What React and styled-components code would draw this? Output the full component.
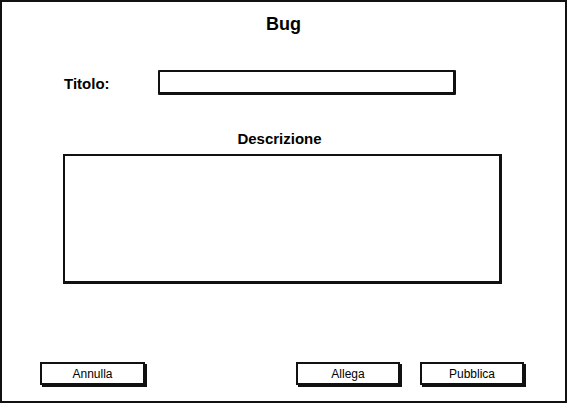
import React from "react";
import styled, { createGlobalStyle } from "styled-components";

const Global = createGlobalStyle`
  html, body { margin: 0; padding: 0; background: #fff; }
  body { font-family: "Liberation Sans", Arial, sans-serif; color: #000; }
`;

const Frame = styled.div`
  box-sizing: border-box;
  width: 567px;
  height: 403px;
  border: 2px solid #111;
  background: #fff;
  display: flex;
  flex-direction: column;
`;

const Title = styled.h1`
  margin: 11px 0 0;
  font-size: 18px;
  line-height: 22px;
  font-weight: bold;
  text-align: center;
`;

const FieldRow = styled.div`
  display: flex;
  align-items: center;
  margin: 35px 0 0 62px;
`;

const Label = styled.label`
  width: 94px;
  font-size: 15px;
  font-weight: bold;
  line-height: 18px;
  padding-top: 2px;
`;

const Input = styled.div`
  box-sizing: border-box;
  width: 298px;
  height: 25px;
  border: 2px solid #111;
  border-right-width: 3px;
  border-bottom-width: 3px;
  border-radius: 1px;
`;

const Section = styled.div`
  display: flex;
  flex-direction: column;
  margin: 35px 0 0 61px;
  width: 439px;
`;

const SectionLabel = styled.div`
  text-align: center;
  font-size: 15px;
  font-weight: bold;
  line-height: 18px;
  margin-right: 6px;
`;

const TextArea = styled.div`
  box-sizing: border-box;
  margin-top: 6px;
  height: 130px;
  border: 2px solid #111;
  border-right-width: 3px;
  border-bottom-width: 3px;
`;

const ButtonRow = styled.div`
  margin-top: auto;
  display: flex;
  justify-content: space-between;
  padding: 0 41px 16px 38px;
`;

const Group = styled.div`
  display: flex;
  gap: 20px;
`;

const Button = styled.button`
  box-sizing: border-box;
  width: 105px;
  height: 23px;
  padding: 0;
  background: #fff;
  border: 2px solid #111;
  box-shadow: 2px 2px 0 #111;
  font-family: "Liberation Sans", Arial, sans-serif;
  font-size: 12px;
  color: #000;
`;

const SmallButton = styled(Button)`
  width: 104px;
`;

export default function App() {
  return (
    <>
      <Global />
      <Frame>
        <Title>Bug</Title>
        <FieldRow>
          <Label>Titolo:</Label>
          <Input />
        </FieldRow>
        <Section>
          <SectionLabel>Descrizione</SectionLabel>
          <TextArea />
        </Section>
        <ButtonRow>
          <Button>Annulla</Button>
          <Group>
            <SmallButton>Allega</SmallButton>
            <SmallButton>Pubblica</SmallButton>
          </Group>
        </ButtonRow>
      </Frame>
    </>
  );
}
